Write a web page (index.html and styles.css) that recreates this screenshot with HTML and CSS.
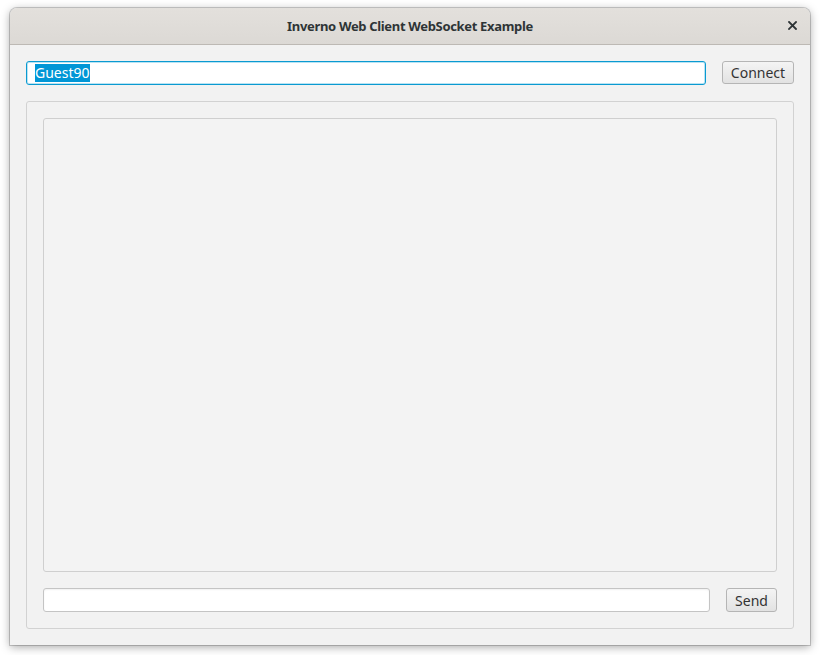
FILE: index.html
```html
<!DOCTYPE html>
<html lang="en">
<head>
<meta charset="utf-8">
<title>Inverno Web Client WebSocket Example</title>
<link rel="stylesheet" href="styles.css">
</head>
<body>
<div class="window">
  <header class="titlebar">
    <span class="title">Inverno Web Client WebSocket Example</span>
    <button class="close" aria-label="Close">
      <svg width="9" height="9" viewBox="0 0 9 9"><path d="M1 1 L8 8 M8 1 L1 8" stroke="#2e3436" stroke-width="1.8" stroke-linecap="square" fill="none"/></svg>
    </button>
  </header>
  <main class="content">
    <div class="row">
      <div class="field focused"><span class="sel">Guest90</span></div>
      <button class="btn btn-connect">Connect</button>
    </div>
    <section class="panel">
      <div class="log"></div>
      <div class="row">
        <div class="field"></div>
        <button class="btn btn-send">Send</button>
      </div>
    </section>
  </main>
</div>
</body>
</html>
```

FILE: styles.css
```css
* { box-sizing: border-box; }
html, body { margin: 0; padding: 0; }
body {
  background: #ffffff;
  width: 820px;
  height: 655px;
  overflow: hidden;
  font-family: "Noto Sans", "Open Sans", sans-serif;
  font-size: 14px;
  color: #333333;
}
.window {
  margin: 8px 10px 0 10px;
  width: 800px;
  height: 637px;
  background: #f2f2f2;
  border-radius: 7px 7px 0 0;
  box-shadow: 0 2px 10px rgba(0,0,0,0.35), 0 0 0 1px rgba(0,0,0,0.18);
  display: flex;
  flex-direction: column;
  overflow: hidden;
}
.titlebar {
  height: 37px;
  flex: none;
  background: linear-gradient(#e3e0dc, #dcd9d5);
  border-bottom: 1px solid #bdb9b4;
  display: flex;
  align-items: center;
  justify-content: center;
  position: relative;
}
.title {
  font-family: "Noto Sans", "Open Sans", sans-serif;
  font-weight: bold;
  font-size: 13px;
  color: #2e3436;
  letter-spacing: -0.33px;
}
.close {
  position: absolute;
  right: 13px;
  top: 13px;
  width: 9px;
  height: 9px;
  padding: 0;
  border: 0;
  background: none;
  display: flex;
}
.content {
  flex: 1;
  padding: 16px;
  display: flex;
  flex-direction: column;
  gap: 16px;
}
.row {
  display: flex;
  gap: 16px;
  height: 24px;
  flex: none;
}
.field {
  flex: 1;
  height: 24px;
  background: #ffffff;
  border: 1px solid #c4c4c4;
  border-radius: 3px;
  box-shadow: inset 0 1px 2px rgba(0,0,0,0.06);
  display: flex;
  align-items: center;
  padding: 0 8px;
  font-size: 14px;
}
.field.focused {
  border-color: #0a9ad1;
  box-shadow: inset 0 0 0 1px #b9e3f3;
}
.sel {
  background: #0096d6;
  color: #ffffff;
  line-height: 18px;
}
.btn {
  flex: none;
  height: 23px;
  border: 1px solid #b5b5b5;
  border-radius: 3px;
  background: linear-gradient(#f4f4f4, #e2e2e2);
  font-family: "Noto Sans", "Open Sans", sans-serif;
  font-size: 14px;
  color: #333333;
  padding: 0;
  display: flex;
  align-items: center;
  justify-content: center;
}
.btn-connect { width: 72px; }
.btn-send { width: 51px; height: 24px; }
.panel {
  flex: 1;
  border: 1px solid #d2d2d2;
  border-radius: 3px;
  padding: 16px;
  display: flex;
  flex-direction: column;
  gap: 16px;
}
.log {
  flex: 1;
  border: 1px solid #cfcfcf;
  border-radius: 3px;
  background: #f3f3f3;
}
```
